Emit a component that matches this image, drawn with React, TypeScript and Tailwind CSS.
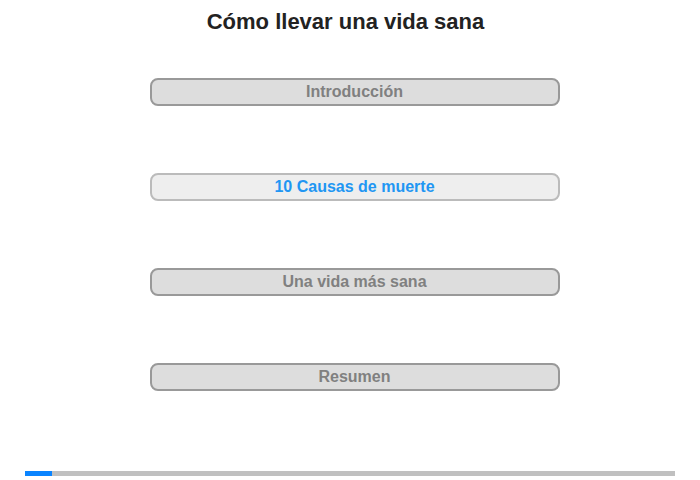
const secciones = [
  { id: "intro", titulo: "Introducción", activo: false },
  { id: "causas", titulo: "10 Causas de muerte", activo: true },
  { id: "sana", titulo: "Una vida más sana", activo: false },
  { id: "resumen", titulo: "Resumen", activo: false },
];

export default function App() {
  const progreso = 27;
  return (
    <main className="w-[700px] h-[480px] bg-white font-['Liberation_Sans',Arial,sans-serif] flex flex-col items-center">
      <h1 className="mt-[9px] mr-[9px] text-[22px] leading-[26px] font-bold text-[#222]">
        Cómo llevar una vida sana
      </h1>
      <ul className="mt-[43px] ml-[9px] flex flex-col gap-[67px]">
        {secciones.map((s) => (
          <li
            key={s.id}
            className={
              s.activo
                ? "w-[410px] h-[28px] rounded-[8px] border-2 border-[#bbb] bg-[#eee] flex items-center justify-center text-[16px] font-bold text-[#2196f3]"
                : "w-[410px] h-[28px] rounded-[8px] border-2 border-[#999] bg-[#ddd] flex items-center justify-center text-[16px] font-bold text-[#808080]"
            }
          >
            {s.titulo}
          </li>
        ))}
      </ul>
      <div className="mt-auto mb-[4px] w-[650px] h-[5px] bg-[#c0c0c0]">
        <div className="h-full bg-[#0a84ff]" style={{ width: `${progreso}px` }} />
      </div>
    </main>
  );
}
